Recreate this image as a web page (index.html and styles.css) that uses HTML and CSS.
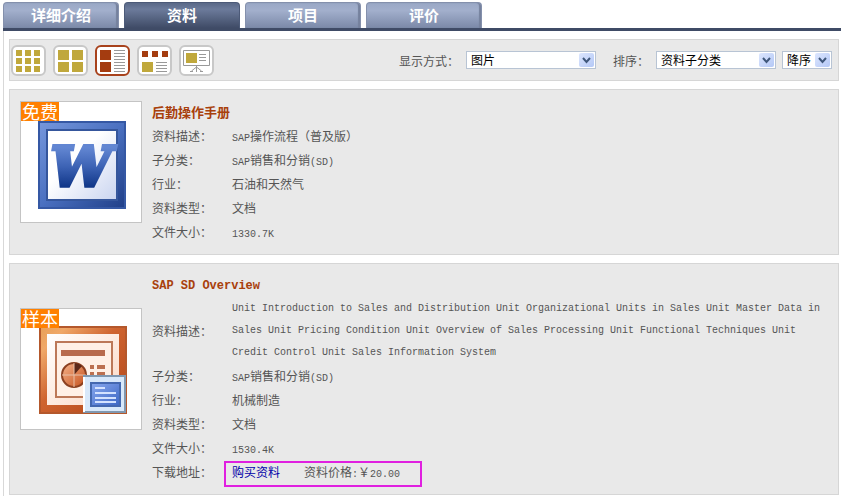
FILE: index.html
```html
<!DOCTYPE html>
<html lang="zh-CN">
<head>
    <meta charset="UTF-8">
    <title>资料</title>
    <link rel="stylesheet" href="styles.css">
</head>
<body>

<nav class="tabs">
    <a class="tab" href="#intro">详细介绍</a>
    <a class="tab active" href="#files">资料</a>
    <a class="tab" href="#projects">项目</a>
    <a class="tab" href="#reviews">评价</a>
</nav>

<main class="panel">

    <!-- 工具栏 -->
    <form class="toolbar">
        <div class="views">
            <button type="button" class="view-btn" aria-label="小图标">
                <svg viewBox="0 0 31 27" fill="#c0a83c">
                    <path d="M3 3h6v6H3zM12 3h6v6h-6zM21 3h6v6h-6zM3 11h6v6H3zM12 11h6v6h-6zM21 11h6v6h-6zM3 19h6v6H3zM12 19h6v6h-6zM21 19h6v6h-6z"/>
                </svg>
            </button>
            <button type="button" class="view-btn" aria-label="大图标">
                <svg viewBox="0 0 31 27" fill="#c0a83c">
                    <path d="M3 3h11v10H3zM17 3h11v10H17zM3 15h11v10H3zM17 15h11v10H17z"/>
                </svg>
            </button>
            <button type="button" class="view-btn selected" aria-label="列表">
                <svg viewBox="0 0 31 27">
                    <path fill="#a43c10" d="M3 3h11v10H3zM3 15h11v10H3z"/>
                    <path stroke="#999" d="M17 3.500h11M17 6.500h11M17 9.500h11M17 12.500h11M17 15.500h11M17 18.500h11M17 21.500h11M17 24.500h11"/>
                </svg>
            </button>
            <button type="button" class="view-btn" aria-label="混合">
                <svg viewBox="0 0 31 27">
                    <path fill="#a43c10" d="M3 4h6v6H3zM13 4h6v6h-6zM23 4h6v6h-6z"/>
                    <path fill="#c0a83c" d="M3 15h11v10H3z"/>
                    <path stroke="#999" d="M17 15.500h11M17 18.500h11M17 21.500h11M17 24.500h11"/>
                </svg>
            </button>
            <button type="button" class="view-btn" aria-label="幻灯片">
                <svg viewBox="0 0 31 27" fill="none" stroke="#999">
                    <path d="M2.500 3.500h26v15h-26zM15.500 18v7M15.500 20l-5 4M15.500 20l5 4M9 24.500h3M19 24.500h3"/>
                    <path fill="#c0a83c" stroke="none" d="M5 6h11v10H5z"/>
                    <path d="M18 7.500h7M18 10.500h7M18 13.500h7"/>
                </svg>
            </button>
        </div>

        <div class="filters">
            <label for="display">显示方式：</label>
            <span class="select-box display">
                <select id="display"><option>图片</option><option>列表</option></select>
                <svg class="arrow" viewBox="0 0 15 14"><path d="M4 5l3.500 4L11 5"/></svg>
            </span>
            <label for="sort">排序：</label>
            <span class="select-box sort">
                <select id="sort"><option>资料子分类</option><option>行业</option></select>
                <svg class="arrow" viewBox="0 0 15 14"><path d="M4 5l3.500 4L11 5"/></svg>
            </span>
            <span class="select-box order">
                <select aria-label="顺序"><option>降序</option><option>升序</option></select>
                <svg class="arrow" viewBox="0 0 15 14"><path d="M4 5l3.500 4L11 5"/></svg>
            </span>
        </div>
    </form>

    <!-- Word 文档 -->
    <article class="item">
        <div class="thumb">
            <svg viewBox="0 0 120 120">
                <defs>
                    <linearGradient id="wFrame" x1="0" y1="0" x2="1" y2="1">
                        <stop offset="0" stop-color="#7697dc"/>
                        <stop offset="0.5" stop-color="#4a70c0"/>
                        <stop offset="1" stop-color="#203f88"/>
                    </linearGradient>
                    <linearGradient id="wPaper" x1="0" y1="0" x2="1" y2="1">
                        <stop offset="0.4" stop-color="#fff"/>
                        <stop offset="1" stop-color="#c9d4f0"/>
                    </linearGradient>
                    <linearGradient id="wLetter" x1="0" y1="0" x2="0" y2="1">
                        <stop offset="0.2" stop-color="#6286d2"/>
                        <stop offset="0.5" stop-color="#3c62b4"/>
                        <stop offset="0.8" stop-color="#12388a"/>
                    </linearGradient>
                </defs>
                <rect x="18" y="20" width="86" height="86" fill="url(#wFrame)" stroke="#3558a4" stroke-width="2"/>
                <rect x="26" y="28" width="70" height="70" fill="url(#wPaper)" stroke="#35569c" stroke-width="2"/>
                <text class="word-letter" x="60" y="84" text-anchor="middle" fill="url(#wLetter)" stroke="url(#wLetter)" stroke-width="4">W</text>
            </svg>
            <span class="badge">免费</span>
        </div>
        <div class="info">
            <h2>后勤操作手册</h2>
            <table>
                <tr><th scope="row">资料描述：</th><td><span class="en">SAP</span>操作流程（普及版）</td></tr>
                <tr><th scope="row">子分类：</th><td><span class="en">SAP</span>销售和分销<span class="en">(SD)</span></td></tr>
                <tr><th scope="row">行业：</th><td>石油和天然气</td></tr>
                <tr><th scope="row">资料类型：</th><td>文档</td></tr>
                <tr><th scope="row">文件大小：</th><td><span class="en">1330.7K</span></td></tr>
            </table>
        </div>
    </article>

    <!-- PPT 文档 -->
    <article class="item">
        <div class="thumb">
            <svg viewBox="0 0 120 120">
                <defs>
                    <linearGradient id="pFrame" x1="0" y1="0" x2="1" y2="1">
                        <stop offset="0" stop-color="#e8a058"/>
                        <stop offset="0.15" stop-color="#f0a868"/>
                        <stop offset="0.45" stop-color="#cf6430"/>
                        <stop offset="1" stop-color="#b04418"/>
                    </linearGradient>
                    <linearGradient id="pPaper" x1="0" y1="0" x2="1" y2="1">
                        <stop offset="0" stop-color="#fff"/>
                        <stop offset="1" stop-color="#fbd8c4"/>
                    </linearGradient>
                    <linearGradient id="pPie" x1="0" y1="0" x2="1" y2="1">
                        <stop offset="0" stop-color="#f6b48c"/>
                        <stop offset="1" stop-color="#c4501c"/>
                    </linearGradient>
                    <linearGradient id="pScreen" x1="0" y1="0" x2="1" y2="1">
                        <stop offset="0" stop-color="#88a8ee"/>
                        <stop offset="1" stop-color="#3c66c4"/>
                    </linearGradient>
                </defs>
                <rect x="19" y="18" width="86" height="86" fill="url(#pFrame)" stroke="#b4582c" stroke-width="2"/>
                <rect x="26" y="25" width="72" height="71" fill="url(#pPaper)"/>
                <rect x="35" y="33" width="56" height="55" fill="#fff0e6" stroke="#bc7858" stroke-width="2"/>
                <rect x="40" y="41" width="44" height="6" fill="#b86a4c"/>
                <circle cx="53" cy="66" r="12" fill="url(#pPie)" stroke="#8c4020" stroke-width="2"/>
                <path fill="#5c2818" d="M53 66V54a12 12 0 0 1 8 3z"/>
                <path stroke="#e8c0a8" d="M53 54v24M41 66h24" fill="none"/>
                <path fill="#bc7050" d="M69 56h4v4h-4zM76 56h8v4h-8zM69 63h4v3h-4zM76 63h8v3h-8z"/>
                <rect x="62" y="67" width="43" height="37" fill="#d8e8fa"/>
                <path fill="none" stroke="#8098b0" stroke-width="2" d="M62 67h42v36H62"/>
                <path stroke="#fff" stroke-width="2" d="M63 68v35"/>
                <rect x="70" y="74" width="29" height="23" fill="url(#pScreen)" stroke="#4468b0" stroke-width="2"/>
                <path stroke="#d4e2ff" stroke-width="2" d="M74 79h10M74 84h21M74 89h21M74 93h21"/>
            </svg>
            <span class="badge">样本</span>
        </div>
        <div class="info">
            <h2 class="en-title">SAP SD Overview</h2>
            <table>
                <tr><th scope="row">资料描述：</th><td class="desc">Unit Introduction to Sales and Distribution Unit Organizational Units in Sales Unit Master Data in Sales Unit Pricing Condition Unit Overview of Sales Processing Unit Functional Techniques Unit Credit Control Unit Sales Information System</td></tr>
                <tr><th scope="row">子分类：</th><td><span class="en">SAP</span>销售和分销<span class="en">(SD)</span></td></tr>
                <tr><th scope="row">行业：</th><td>机械制造</td></tr>
                <tr><th scope="row">资料类型：</th><td>文档</td></tr>
                <tr><th scope="row">文件大小：</th><td><span class="en">1530.4K</span></td></tr>
                <tr><th scope="row">下载地址：</th><td class="download"><a href="#buy">购买资料</a><span>资料价格<span class="en">:</span>￥<span class="en">20.00</span></span></td></tr>
            </table>
        </div>
    </article>

</main>

</body>
</html>
```
FILE: styles.css
```css
*,
*::before {
    box-sizing: border-box;
}

body {
    margin: 0;
    padding: 2px 0 0 3px;
    background-color: #fff;
    color: #555;
    font-family: "Noto Sans CJK SC", sans-serif;
    font-size: 12px;
}

.tabs {
    display: flex;
    gap: 5px;
    border-bottom: 3px solid #3f4b66;
}

.tab {
    width: 116px;
    height: 26px;
    border: 1px solid #8490ac;
    border-bottom: none;
    border-radius: 4px 4px 0 0;
    background: linear-gradient(#9aa8c6, #a2afcc 30%, #7b89a8);
    box-shadow: inset -2px 0 1px #75819d;
    color: #fff;
    font-size: 15px;
    font-weight: bold;
    line-height: 24px;
    text-align: center;
    text-decoration: none;
}

.tab.active {
    border-color: #4c5a78;
    background: linear-gradient(#5a6988, #6c7b9b 25%, #3f4b66);
    box-shadow: none;
}

.panel {
    display: flex;
    flex-direction: column;
    gap: 8px;
    padding: 8px 2px 1px 5px;
    border-left: 1px solid #d8d8d8;
}

.toolbar,
.item {
    border: 1px solid #d6d6d6;
    background-color: #e9e9e9;
}

.toolbar {
    display: flex;
    justify-content: space-between;
    align-items: center;
    height: 42px;
    padding: 0 6px 0 1px;
}

.views {
    display: flex;
    gap: 7px;
}

.view-btn {
    width: 35px;
    height: 31px;
    padding: 0;
    border: 2px solid #c8c8c8;
    border-radius: 6px;
    background-color: #fff;
    cursor: pointer;
}

.view-btn.selected {
    border-color: #a8421c;
}

.view-btn svg {
    display: block;
    width: 31px;
    height: 27px;
}

.filters {
    display: flex;
    align-items: center;
}

.filters label {
    margin-right: 7px;
}

.select-box {
    position: relative;
    height: 18px;
}

.select-box select {
    display: block;
    width: 100%;
    height: 18px;
    padding: 0 18px 0 4px;
    border: 1px solid #b8c4d4;
    border-radius: 0;
    background-color: #fff;
    color: #000;
    font-family: inherit;
    font-size: 12px;
    line-height: 16px;
    appearance: none;
}

.select-box.display {
    width: 130px;
    margin-right: 17px;
}

.select-box.sort {
    width: 120px;
    margin-right: 6px;
}

.select-box.order {
    width: 50px;
}

.arrow {
    position: absolute;
    top: 2px;
    right: 2px;
    width: 15px;
    height: 14px;
    border-radius: 2px;
    background: linear-gradient(135deg, #dce6fe, #b4c8f6);
    fill: none;
    stroke: #40587c;
    stroke-width: 2;
    pointer-events: none;
}

.item {
    display: flex;
    align-items: center;
    gap: 10px;
    padding: 10px;
}

.thumb {
    position: relative;
    flex: none;
    width: 122px;
    height: 122px;
    margin-bottom: 20px;
    border: 1px solid #c4c4c4;
    background-color: #fff;
}

.thumb svg {
    display: block;
    width: 120px;
    height: 120px;
}

.word-letter {
    font: italic bold 54px "DejaVu Serif", serif;
}

.badge {
    position: absolute;
    top: 0;
    left: 0;
    padding: 0 1px;
    background-color: #ff8000;
    color: #fff;
    font-size: 18px;
    line-height: 19px;
}

.info {
    flex: 1;
}

.info h2 {
    margin: 0;
    color: #a8400c;
    font-size: 13px;
    line-height: 24px;
}

.info .en-title {
    font-family: "Liberation Mono", monospace;
    font-size: 12px;
}

.info table {
    width: 100%;
    border-collapse: collapse;
}

.info th,
.info td {
    height: 24px;
    padding: 0;
    line-height: 22px;
    text-align: left;
}

.info th {
    width: 80px;
    font-weight: normal;
}

.en,
.info .desc {
    font-family: "Liberation Mono", monospace;
    font-size: 10px;
}

.en {
    line-height: 12px;
}

.download {
    position: relative;
}

/* 购买区域高亮框 */
.download::before {
    content: "";
    position: absolute;
    top: 1px;
    left: -8px;
    width: 198px;
    height: 26px;
    border: 2px solid #e020e0;
    pointer-events: none;
}

.download a {
    margin-right: 24px;
    color: #0000a8;
    text-decoration: none;
}
```
